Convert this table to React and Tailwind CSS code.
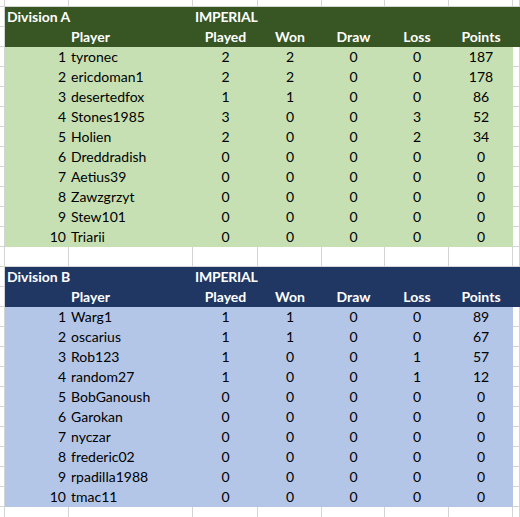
import React from 'react';

const divisionA = [
  ['tyronec', 2, 2, 0, 0, 187],
  ['ericdoman1', 2, 2, 0, 0, 178],
  ['desertedfox', 1, 1, 0, 0, 86],
  ['Stones1985', 3, 0, 0, 3, 52],
  ['Holien', 2, 0, 0, 2, 34],
  ['Dreddradish', 0, 0, 0, 0, 0],
  ['Aetius39', 0, 0, 0, 0, 0],
  ['Zawzgrzyt', 0, 0, 0, 0, 0],
  ['Stew101', 0, 0, 0, 0, 0],
  ['Triarii', 0, 0, 0, 0, 0],
];

const divisionB = [
  ['Warg1', 1, 1, 0, 0, 89],
  ['oscarius', 1, 1, 0, 0, 67],
  ['Rob123', 1, 0, 0, 1, 57],
  ['random27', 1, 0, 0, 1, 12],
  ['BobGanoush', 0, 0, 0, 0, 0],
  ['Garokan', 0, 0, 0, 0, 0],
  ['nyczar', 0, 0, 0, 0, 0],
  ['frederic02', 0, 0, 0, 0, 0],
  ['rpadilla1988', 0, 0, 0, 0, 0],
  ['tmac11', 0, 0, 0, 0, 0],
];

const cols = 'grid grid-cols-[5px_64px_124px_65px_64px_63px_64px_64px_1fr]';
const grid = 'border-r border-b border-[#d4d4d4]';

// plain white spreadsheet row, gridlines only
const BlankRow = ({ h = 'h-5' }) => (
  <div className={`${cols} ${h}`}>
    {Array.from({ length: 9 }).map((_, i) => (
      <div key={i} className={grid} />
    ))}
  </div>
);

const Header = ({ name, dark }) => (
  <>
    <div className={`${cols} h-5 ${dark}`}>
      <div className={`${grid} bg-white`} />
      <div className="col-span-2 pl-[2px] whitespace-nowrap">{name}</div>
      <div className="col-span-6 pl-[2px] whitespace-nowrap tracking-[-0.2px]">IMPERIAL</div>
    </div>
    <div className={`${cols} h-5 ${dark}`}>
      <div className={`${grid} bg-white`} />
      <div />
      <div className="pl-[2px]">Player</div>
      <div className="text-center">Played</div>
      <div className="text-center">Won</div>
      <div className="text-center">Draw</div>
      <div className="text-center">Loss</div>
      <div className="text-center">Points</div>
      <div />
    </div>
  </>
);

const Division = ({ name, rows, dark, light }) => (
  <div>
    <Header name={name} dark={dark} />
    {rows.map(([player, played, won, draw, loss, points], i) => (
      <div key={player} className={`${cols} h-5`}>
        <div className={grid} />
        <div className={`${light} text-right pr-[3px]`}>{i + 1}</div>
        <div className={`${light} pl-[2px]`}>{player}</div>
        <div className={`${light} text-center`}>{played}</div>
        <div className={`${light} text-center`}>{won}</div>
        <div className={`${light} text-center`}>{draw}</div>
        <div className={`${light} text-center`}>{loss}</div>
        <div className={`${light} text-center`}>{points}</div>
        <div className={grid} />
      </div>
    ))}
  </div>
);

export default function App() {
  return (
    <div className="w-[520px] h-[517px] overflow-hidden bg-white text-[14px] leading-5 text-black font-['Lato',_'Open_Sans',_sans-serif]">
      <BlankRow h="h-[7px]" />
      <Division
        name="Division A"
        rows={divisionA}
        dark="bg-[#375623] text-white font-bold"
        light="bg-[#c6e0b4]"
      />
      <BlankRow />
      <Division
        name="Division B"
        rows={divisionB}
        dark="bg-[#203764] text-white font-bold"
        light="bg-[#b4c6e7]"
      />
      <BlankRow />
    </div>
  );
}
